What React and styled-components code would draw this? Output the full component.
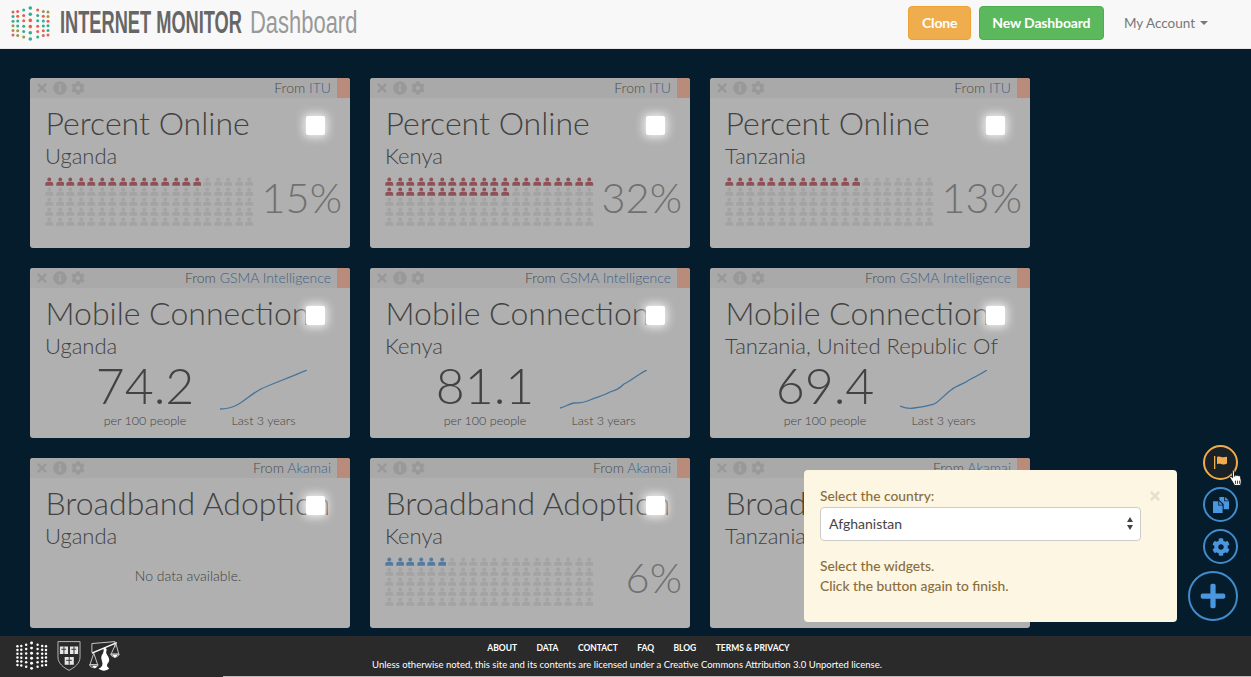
import React from 'react';
import styled, { createGlobalStyle } from 'styled-components';
import { FaTimes, FaInfoCircle, FaCog, FaPlus } from 'react-icons/fa';

const GlobalStyle = createGlobalStyle`
  html, body {
    margin: 0;
    padding: 0;
    height: 100%;
    overflow: hidden;
    font-family: Lato, "Liberation Sans", sans-serif;
  }
  * { box-sizing: border-box; }
`;

const Page = styled.div`
  position: relative;
  display: flex;
  flex-direction: column;
  height: 100vh;
  background: #041c2c;
`;

const Navbar = styled.header`
  display: flex;
  align-items: center;
  height: 49px;
  flex: none;
  padding: 0 43px 3px 10px;
  background: #f8f8f8;
  border-bottom: 1px solid #e7e7e7;
`;

const Brand = styled.div`
  display: flex;
  align-items: center;
  flex: 1;
`;

const BrandWord = styled.span`
  display: inline-block;
  width: ${(p) => p.$width}px;
  margin-left: ${(p) => p.$left}px;
  font-family: "Liberation Sans", sans-serif;
  font-weight: ${(p) => p.$weight};
  font-size: 31px;
  line-height: 36px;
  white-space: nowrap;
  color: ${(p) => p.$color};
  transform: scaleX(${(p) => p.$squeeze});
  transform-origin: left center;
`;

const NavButton = styled.button`
  height: 34px;
  margin-right: 8px;
  padding: 0 ${(p) => p.$pad}px;
  border: 1px solid ${(p) => p.$border};
  border-radius: 4px;
  background: ${(p) => p.$bg};
  color: #fff;
  font: 700 14px Lato, sans-serif;
  letter-spacing: -0.15px;
`;

const AccountLink = styled.a`
  display: flex;
  align-items: center;
  margin-left: 12px;
  color: #777;
  font-size: 13.5px;
`;

const Caret = styled.span`
  width: 0;
  height: 0;
  margin-left: 5px;
  border-top: 4px solid #777;
  border-left: 4px solid transparent;
  border-right: 4px solid transparent;
`;

const Main = styled.main`
  flex: 1;
  padding: 29px 0 0 30px;
  overflow: hidden;
`;

const WidgetGrid = styled.div`
  display: grid;
  grid-template-columns: repeat(3, 320px);
  grid-auto-rows: 170px;
  column-gap: 20px;
  row-gap: 20px;
`;

const Card = styled.article`
  position: relative;
  display: flex;
  flex-direction: column;
  background: #b0b0b0;
  border-radius: 3px;
  overflow: hidden;
`;

const CardTop = styled.div`
  display: flex;
  align-items: center;
  flex: none;
  height: 20px;
  padding-left: 5px;
  background: #a9a9a9;
`;

const CardTools = styled.div`
  display: flex;
  align-items: center;
  gap: 4px;
  flex: 1;
  font-size: 14px;
`;

const Source = styled.div`
  margin: -2px 6px 0 0;
  color: #4a4a4a;
  font-size: 14px;
  font-weight: 300;
`;

const SourceLink = styled.a`
  color: #3f6288;
`;

const Tab = styled.div`
  align-self: stretch;
  width: 13px;
  background: #b98b7a;
`;

const Title = styled.h2`
  margin: 4px 22px 0 15.5px;
  overflow: hidden;
  white-space: nowrap;
  color: #424242;
  font-size: 32px;
  font-weight: 300;
  line-height: 42px;
`;

const Subtitle = styled.h3`
  margin: 0 0 0 15px;
  color: #424242;
  font-size: 22px;
  font-weight: 300;
  line-height: 24px;
`;

const SelectBox = styled.span`
  position: absolute;
  top: 38px;
  left: 276px;
  width: 19px;
  height: 19px;
  border-radius: 2px;
  background: #fff;
  box-shadow: 0 0 10px 2px rgba(255, 255, 255, 0.85);
`;

const PeopleRow = styled.div`
  display: flex;
  justify-content: space-between;
  align-items: flex-start;
  padding: 9px 8px 0 15px;
`;

const People = styled.div`
  display: grid;
  grid-template-columns: repeat(20, 8.5px);
  grid-auto-rows: 9px;
  column-gap: 2.05px;
  row-gap: 1px;
`;

const Percent = styled.div`
  color: #707070;
  font-size: 41.5px;
  font-weight: 300;
  line-height: 41px;
`;

const NoData = styled.p`
  margin: 19px 0 0;
  padding-right: 4px;
  color: #424242;
  font-size: 14px;
  font-weight: 300;
  text-align: center;
`;

const StatRow = styled.div`
  display: flex;
  padding: 2px 0 0 55px;
  gap: 15px;
`;

const StatColumn = styled.div`
  display: flex;
  flex-direction: column;
  align-items: center;
  justify-content: flex-end;
  width: ${(p) => p.$width}px;
`;

const StatValue = styled.div`
  margin-bottom: 3px;
  color: #424242;
  font-size: 50px;
  font-weight: 300;
  line-height: 50px;
  white-space: nowrap;
`;

const StatLabel = styled.div`
  color: #424242;
  font-size: 12.5px;
  font-weight: 300;
  line-height: 16px;
  white-space: nowrap;
`;

const SparkFrame = styled.svg`
  margin-bottom: 3px;
`;

const Popover = styled.section`
  position: absolute;
  top: 470px;
  left: 804px;
  width: 373px;
  height: 152px;
  padding: 16px 16px;
  border-radius: 4px;
  background: #fcf6e2;
  color: #8a6d3b;
  font-size: 13.8px;
  line-height: 20px;
  font-weight: 500;
`;

const PopoverClose = styled.span`
  position: absolute;
  top: 18px;
  right: 15px;
  color: #e8e0c6;
  font-size: 14px;
`;

const FieldLabel = styled.div`
  margin-bottom: 1px;
`;

const SelectWrap = styled.div`
  position: relative;
  width: 321px;
  height: 34px;
  border: 1px solid #ccc;
  border-radius: 4px;
  background: #fff;
`;

const CountrySelect = styled.select`
  width: 100%;
  height: 100%;
  padding: 0 8px 2px;
  border: 0;
  border-radius: 4px;
  background: transparent;
  appearance: none;
  color: #444;
  font: 14px Lato, sans-serif;
`;

const SelectArrows = styled.svg`
  position: absolute;
  top: 9px;
  right: 6px;
`;

const PopoverNote = styled.p`
  margin: 15px 0 0;
`;

const ActionRail = styled.div`
  position: absolute;
  top: 445px;
  right: 13px;
  display: flex;
  flex-direction: column;
  align-items: flex-end;
  gap: 7px;
`;

const RoundButton = styled.button`
  position: relative;
  display: flex;
  align-items: center;
  justify-content: center;
  width: ${(p) => (p.$big ? 50 : 35)}px;
  height: ${(p) => (p.$big ? 50 : 35)}px;
  padding: 0;
  border: 2px solid ${(p) => (p.$active ? '#f0ad4e' : '#428bca')};
  border-radius: 50%;
  background: ${(p) => (p.$active ? '#1a2228' : 'transparent')};
  color: ${(p) => (p.$active ? '#f0ad4e' : '#4a97df')};
  font-size: ${(p) => (p.$big ? 28 : 18)}px;
`;

const Pointer = styled.svg`
  position: absolute;
  top: 22px;
  left: 24px;
`;

const Footer = styled.footer`
  position: relative;
  display: flex;
  flex: none;
  height: 41px;
  padding-left: 15px;
  background: #2a2a2a;
  color: #fff;

  &::after {
    content: '';
    position: absolute;
    left: 223px;
    right: 0;
    bottom: 0;
    height: 1px;
    background: #bbb;
  }
`;

const FooterLogos = styled.div`
  display: flex;
  align-items: flex-start;
  gap: 8px;
  width: 105px;
  padding-top: 4px;
`;

const FooterBody = styled.div`
  flex: 1;
  margin-right: 117px;
  padding-top: 6px;
  text-align: center;
`;

const FooterNav = styled.nav`
  display: flex;
  justify-content: center;
  gap: 19.4px;
  padding-left: 23px;
  font-size: 8.5px;
  font-weight: 700;
  line-height: 12px;
`;

const License = styled.div`
  margin-top: 5px;
  font-size: 9.5px;
  line-height: 12px;
`;

const LOGO_X = [12, 16.7, 22.7, 29.3, 36.7, 42.3, 47];
const LOGO_PITCH = [4.6, 4.8, 5.4, 6.2, 5.4, 4.8, 4.6];
const LOGO_COLORS = ['#e8604a', '#2fae95', '#a39345', '#2fae95', '#e8604a', '#2fae95', '#a39345', '#e8604a', '#2fae95'];

const DotLogo = ({ mono, scale = 1 }) => (
  <svg width={42 * scale} height={36 * scale} viewBox="9 4 42 36">
    {LOGO_X.map((x, i) =>
      Array.from({ length: 6 }, (_, j) => (
        <circle
          key={`${i}-${j}`}
          cx={x}
          cy={22.5 + (j - 2.5) * LOGO_PITCH[i]}
          r={i === 3 ? 1.8 : 1.5}
          fill={mono ? '#fff' : LOGO_COLORS[(i * 4 + j * 5) % 9]}
        />
      )),
    )}
  </svg>
);

const Shield = () => (
  <svg width="25" height="32" viewBox="0 0 25 32" fill="none" stroke="#bbb" strokeWidth="1">
    <path d="M1 1h23v16c0 7-6 11-11.500 14C7 28 1 24 1 17z" />
    <path d="M3 6h8.500v8H3zM13.500 6H22v8h-8.500zM8 17h9.500v8H8z" fill="#e6e6e6" stroke="none" />
    <path d="M7.200 6v8M17.700 6v8M12.700 17v8M4.500 9h5M15 9h5M9.500 20.500h6" stroke="#333" />
  </svg>
);

const Scales = () => (
  <svg width="32" height="34" viewBox="0 0 32 34" fill="none" stroke="#ccc" strokeWidth="1">
    <path d="M3 3l24-2v6M3 3v9" />
    <path d="M3 13L29 2" stroke="#fff" strokeWidth="1.500" />
    <path d="M5 13L1 25h8zM28 3l-5 11h8z" />
    <path d="M0.500 25c1 4 8 4 9 0zM22.500 14c1 4 8 4 9 0z" />
    <path d="M15 8c3-1 4 1 3 3-1 3 3 5 3 9 0 3-3 4-2 7l2 2c-3 3-8 3-11 0 3-1 4-3 4-5 0-3-2-5-1-8 1-2 3-4 2-8z" fill="#fff" stroke="none" />
    <path d="M24 15l3 3 3-3zM3 26l3 3 3-3z" fill="#fff" stroke="none" />
  </svg>
);

const PersonIcon = ({ color }) => (
  <svg width="8.500" height="9" viewBox="0 0 9 9" fill={color}>
    <circle cx="4.5" cy="2.3" r="2" />
    <path d="M0.300 9V7C0.300 5.500 1.500 4.800 2.800 4.800h3.400C7.500 4.800 8.700 5.500 8.700 7V9z" />
  </svg>
);

const FlagIcon = () => (
  <svg width="15" height="15" viewBox="0 0 15 15" fill="#f0ad4e">
    <rect x="1" y="1" width="1.3" height="13" />
    <path d="M4 2c2-.8 3-.2 5 .2 2 .3 3 0 5-.4v6.700c-2 1-3 1.100-5 .7C7 8.800 6 8.600 4 9.100z" />
  </svg>
);

const FilesIcon = () => (
  <svg width="16" height="16" viewBox="0 0 15 15" fill="#4a97df">
    <path d="M6 0h4.500v4H15v7.500h-5V6.500L6 2.800z" />
    <path d="M11.300 0L15 3.300h-3.700z" />
    <path d="M0 4h5v4h4v7H0z" />
    <path d="M5.800 4L9 7.200H5.800z" />
  </svg>
);

const HandPointer = () => (
  <Pointer width="15" height="18" viewBox="0 0 14 17">
    <path
      d="M3 1.2c.9-.6 1.800 0 1.900 1L5.300 7l.2-1c.6-.7 1.600-.5 1.800.3.4-.6 1.500-.5 1.800.3.5-.4 1.500-.2 1.700.6l.7 3.900c.2 1.600-.2 3-.9 4.400H5.100L2.500 11 .8 8.300c-.4-.8.5-1.600 1.300-1.100l1.200 1z"
      fill="#fff"
      stroke="#111"
      strokeWidth="0.9"
    />
    <path d="M6 11v3M8 11v3M10 11v3" stroke="#111" strokeWidth="0.8" />
  </Pointer>
);

const Sparkline = ({ points }) => (
  <SparkFrame width="87" height="40" viewBox="0 0 87 40" fill="none" stroke="#44749c" strokeWidth="1.3">
    <path d={points} />
  </SparkFrame>
);

const PeopleGrid = ({ value, color }) => (
  <People>
    {Array.from({ length: 100 }, (_, i) => (
      <PersonIcon key={i} color={i < value ? color : '#a3a3a3'} />
    ))}
  </People>
);

const Widget = ({ widget }) => (
  <Card>
    <CardTop>
      <CardTools>
        <FaTimes color="#999" />
        <FaInfoCircle color="#999" />
        <FaCog color="#999" />
      </CardTools>
      <Source>
        From <SourceLink>{widget.source}</SourceLink>
      </Source>
      <Tab />
    </CardTop>
    <Title>{widget.title}</Title>
    <Subtitle>{widget.country}</Subtitle>
    <SelectBox />
    {widget.percent !== undefined && (
      <PeopleRow>
        <PeopleGrid value={widget.percent} color={widget.color} />
        <Percent>{widget.percent}%</Percent>
      </PeopleRow>
    )}
    {widget.stat && (
      <StatRow>
        <StatColumn $width={120}>
          <StatValue>{widget.stat}</StatValue>
          <StatLabel>per 100 people</StatLabel>
        </StatColumn>
        <StatColumn $width={87}>
          <Sparkline points={widget.spark} />
          <StatLabel>Last 3 years</StatLabel>
        </StatColumn>
      </StatRow>
    )}
    {widget.empty && <NoData>No data available.</NoData>}
  </Card>
);

const RED = '#8f5158';
const BLUE = '#537ba0';
const online = { title: 'Percent Online', source: 'ITU', color: RED };
const mobile = { title: 'Mobile Connections', source: 'GSMA Intelligence' };
const broadband = { title: 'Broadband Adoption', source: 'Akamai', color: BLUE };

const WIDGETS = [
  { ...online, country: 'Uganda', percent: 15 },
  { ...online, country: 'Kenya', percent: 32 },
  { ...online, country: 'Tanzania', percent: 13 },
  { ...mobile, country: 'Uganda', stat: '74.2', spark: 'M0 39c6 0 11-1 17-4 8-4 14-11 24-16 8-4 30-12 46-19' },
  { ...mobile, country: 'Kenya', stat: '81.1', spark: 'M0 38c5-1 8-4 14-5 6 0 10 0 16-3 7-3 13-4 20-8 6-2 9-3 14-8 7-3 14-10 23-14' },
  { ...mobile, country: 'Tanzania, United Republic Of', stat: '69.4', spark: 'M0 36c5 2 9 3 14 2 8-1 13-2 20-4 6-3 10-9 17-14 6-5 13-6 18-10 6-3 12-6 18-10' },
  { ...broadband, country: 'Uganda', empty: true },
  { ...broadband, country: 'Kenya', percent: 6 },
  { ...broadband, country: 'Tanzania', empty: true },
];

const App = () => (
  <Page>
    <GlobalStyle />
    <Navbar>
      <Brand>
        <DotLogo />
        <BrandWord $width={182} $left={8} $squeeze={0.588} $weight={700} $color="#666">INTERNET MONITOR</BrandWord>
        <BrandWord $width={107} $left={8} $squeeze={0.708} $weight={400} $color="#999">Dashboard</BrandWord>
      </Brand>
      <NavButton $pad={12.5} $bg="#f0ad4e" $border="#eea236">Clone</NavButton>
      <NavButton $pad={12.5} $bg="#5cb85c" $border="#4cae4c">New Dashboard</NavButton>
      <AccountLink>
        My Account
        <Caret />
      </AccountLink>
    </Navbar>
    <Main>
      <WidgetGrid>
        {WIDGETS.map((widget) => (
          <Widget key={widget.title + widget.country} widget={widget} />
        ))}
      </WidgetGrid>
    </Main>
    <Popover>
      <PopoverClose><FaTimes /></PopoverClose>
      <FieldLabel>Select the country:</FieldLabel>
      <SelectWrap>
        <CountrySelect defaultValue="Afghanistan">
          <option>Afghanistan</option>
        </CountrySelect>
        <SelectArrows width="8" height="13" viewBox="0 0 8 13" fill="#444">
          <path d="M4 0l3 5H1zM4 13L1 8h6z" />
        </SelectArrows>
      </SelectWrap>
      <PopoverNote>
        Select the widgets.
        <br />
        Click the button again to finish.
      </PopoverNote>
    </Popover>
    <ActionRail>
      <RoundButton $active>
        <FlagIcon />
        <HandPointer />
      </RoundButton>
      <RoundButton><FilesIcon /></RoundButton>
      <RoundButton><FaCog /></RoundButton>
      <RoundButton $big><FaPlus /></RoundButton>
    </ActionRail>
    <Footer>
      <FooterLogos>
        <DotLogo mono scale={0.85} />
        <Shield />
        <Scales />
      </FooterLogos>
      <FooterBody>
        <FooterNav>
          <span>ABOUT</span>
          <span>DATA</span>
          <span>CONTACT</span>
          <span>FAQ</span>
          <span>BLOG</span>
          <span>TERMS &amp; PRIVACY</span>
        </FooterNav>
        <License>Unless otherwise noted, this site and its contents are licensed under a Creative Commons Attribution 3.0 Unported license.</License>
      </FooterBody>
    </Footer>
  </Page>
);

export default App;
